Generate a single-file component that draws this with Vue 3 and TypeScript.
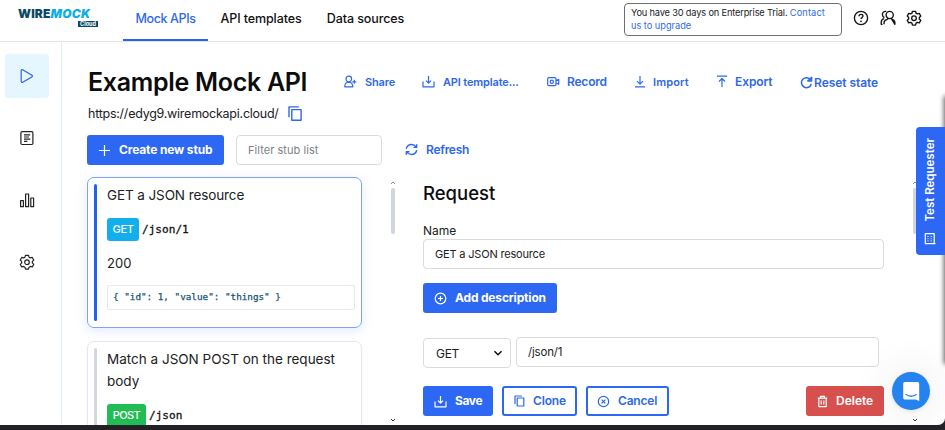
<script setup lang="ts">
import { ref } from 'vue'

interface Action {
  key: string
  label: string
  large?: boolean
}

const tabs = [
  { label: 'Mock APIs', cls: 'tab-mock' },
  { label: 'API templates', cls: 'tab-templates' },
  { label: 'Data sources', cls: 'tab-sources' },
]
const activeTab = ref('Mock APIs')

const actions: Action[] = [
  { key: 'share', label: 'Share' },
  { key: 'template', label: 'API template...' },
  { key: 'record', label: 'Record', large: true },
  { key: 'import', label: 'Import' },
  { key: 'export', label: 'Export', large: true },
  { key: 'reset', label: 'Reset state', large: true },
]

const filter = ref('')
const stubName = ref('GET a JSON resource')
const stubPath = ref('/json/1')
</script>

<template>
  <div class="window">
    <div class="page">
      <header class="header">
        <div class="logo">
          <div class="logo-name"><span class="wire">WIRE</span><span class="mock">MOCK</span></div>
          <span class="logo-cloud">Cloud</span>
        </div>
        <nav class="tabs">
          <a
            v-for="tab in tabs"
            :key="tab.label"
            class="tab"
            :class="[tab.cls, { active: tab.label === activeTab }]"
            @click="activeTab = tab.label"
          >{{ tab.label }}</a>
        </nav>
        <div class="trial">
          You have 30 days on Enterprise Trial. <a class="contact">Contact<br /></a><a class="upgrade">us to upgrade</a>
        </div>
        <div class="header-icons">
          <svg width="16" height="16" viewBox="0 0 16 16">
            <circle cx="8" cy="8" r="6.6" />
            <path d="M6 6.3c0-1.2.9-2 2-2s2 .8 2 1.8c0 1.4-2 1.6-2 3" />
            <circle class="dot" cx="8" cy="11.3" r=".9" />
          </svg>
          <svg width="16" height="16" viewBox="0 0 16 16">
            <circle cx="9.7" cy="5" r="3.6" />
            <path d="M4 14.3v-1.300c0-1.800 1-2.900 2.800-3.400l1.400-1.100M11.200 8.500l1.400 1.100c1.500.5 2.300 1.700 2.300 3.300v1.400zM6.300 1.400C3.600 1 2.400 2.700 2.400 4.600c0 1.600.9 2.600 2 3.100M4.200 8.600C2.200 9.100 1.200 10.600 1.200 12.400v1.900h1.300" />
          </svg>
          <svg width="16" height="16" viewBox="0 0 16 16">
            <path d="M6.5 1.3h3l.55 1.9 1.25.75 1.95-.5 1.5 2.6-1.4 1.4v1.5l1.4 1.4-1.5 2.6-1.95-.5-1.25.75-.55 1.9h-3l-.55-1.9-1.25-.75-1.95.5-1.5-2.6 1.4-1.4v-1.5L1.25 6.05l1.5-2.6 1.95.5 1.25-.75z" />
            <circle cx="8" cy="8.2" r="2.3" />
          </svg>
        </div>
      </header>

      <div class="body">
        <aside class="sidebar">
          <a class="side-item selected">
            <svg width="16" height="16" viewBox="0 0 16 16">
              <path d="M2.200 2.700v10.600c0 .9.8 1.300 1.500.9l9.200-5.300c.7-.4.7-1.300 0-1.700L3.700 1.800c-.7-.4-1.500 0-1.500.9z" />
            </svg>
          </a>
          <a class="side-item">
            <svg width="16" height="16" viewBox="0 0 16 16">
              <rect x="1.9" y="1.7" width="12" height="12.8" rx="1.2" />
              <path d="M5 4.900h6.200M5 7h5M5 9.100h6.200M5 11.300h3.400" />
            </svg>
          </a>
          <a class="side-item">
            <svg width="16" height="16" viewBox="0 0 16 16">
              <rect x="1.6" y="8.7" width="2.8" height="6" />
              <rect x="6.6" y="2" width="3" height="12.7" />
              <rect x="11.800" y="6" width="2.800" height="8.700" />
            </svg>
          </a>
          <a class="side-item">
            <svg width="16" height="16" viewBox="0 0 16 16">
              <path d="M6.5 1.3h3l.55 1.9 1.25.75 1.95-.5 1.5 2.6-1.4 1.4v1.5l1.4 1.4-1.5 2.6-1.95-.5-1.25.75-.55 1.9h-3l-.55-1.9-1.25-.75-1.95.5-1.5-2.6 1.4-1.4v-1.5L1.25 6.05l1.5-2.6 1.95.5 1.25-.75z" />
              <circle cx="8" cy="8.2" r="2.3" />
            </svg>
          </a>
        </aside>

        <main class="main">
          <div class="title-row">
            <h1>Example Mock API</h1>
            <div class="actions">
              <a v-for="a in actions" :key="a.key" class="action" :class="[a.key, { large: a.large }]">
                <svg width="13" height="13" viewBox="0 0 13 13">
                  <template v-if="a.key === 'share'">
                    <circle cx="4.8" cy="4" r="2.8" />
                    <path d="M.8 11.800c0-2.600 1-4.300 3-4.300h2c1.600 0 2.800 1.600 3 4.300zM10.300 4.800v4M8.300 6.800h4" />
                  </template>
                  <path v-else-if="a.key === 'template'" d="M6.500 1v7M4 5.700l2.500 2.500L9 5.700M1 6.600v5.200h11V6.600" />
                  <template v-else-if="a.key === 'record'">
                    <rect x=".7" y="2.7" width="8.300" height="8" rx="1.2" />
                    <circle cx="4.8" cy="6.8" r="1.6" />
                    <path d="M9 5.600l2.700-1.300v5L9 8" />
                  </template>
                  <path v-else-if="a.key === 'import'" d="M6 1v8M3 6.200l3 3 3-3M1 11.800h10.200" />
                  <path v-else-if="a.key === 'export'" d="M6 12V3.500M3 6.500l3-3 3 3M1 1.200h10.200" />
                  <path v-else class="bold" d="M10.600 3.800A5 5 0 1 0 11.300 8M11.600 1.200v3.900H7.800z" />
                </svg>
                <span>{{ a.label }}</span>
              </a>
            </div>
          </div>

          <div class="url-row">
            <span>https://edyg9.wiremockapi.cloud/</span>
            <svg width="14" height="15" viewBox="0 0 14 15">
              <path d="M3.800 3.600h9.300v10.700H3.800zM1 11.300V.9h9.800" />
            </svg>
          </div>

          <div class="stub-tools">
            <button class="btn solid create">
              <svg width="13" height="13" viewBox="0 0 13 13"><path d="M6.500 1v11M1 6.500h11" /></svg>
              <span>Create new stub</span>
            </button>
            <input v-model="filter" class="filter" placeholder="Filter stub list" />
            <a class="refresh">
              <svg width="13" height="13" viewBox="0 0 13 13">
                <path d="M1.200 5.700C2 2.900 4 1.500 6.500 1.500c2 0 3.700 1 4.800 2.600M11.700 1.200v3.200H8.500M11.800 7.300c-.8 2.800-2.800 4.200-5.300 4.200-2 0-3.700-1-4.800-2.600M1.300 11.800V8.600h3.200" />
              </svg>
              <span>Refresh</span>
            </a>
          </div>

          <div class="columns">
            <section class="stubs">
              <article class="card current">
                <div class="bar"></div>
                <div class="card-body">
                  <h3 class="first-title">GET a JSON resource</h3>
                  <div class="route"><span class="badge get">GET</span><code>/json/1</code></div>
                  <div class="status">200</div>
                  <pre class="snippet">{ "id": 1, "value": "things" }</pre>
                </div>
              </article>
              <article class="card">
                <div class="bar"></div>
                <div class="card-body">
                  <h3>Match a JSON POST on the request body</h3>
                  <div class="route"><span class="badge post">POST</span><code>/json</code></div>
                </div>
              </article>
            </section>

            <div class="scrollbar">
              <svg width="6" height="4" viewBox="0 0 6 4"><path d="M1 3l2-2 2 2" /></svg>
              <i class="thumb"></i>
              <svg class="down" width="6" height="4" viewBox="0 0 6 4"><path d="M1 1l2 2 2-2" /></svg>
            </div>

            <section class="editor">
              <h2>Request</h2>
              <label class="name-label" for="stub-name">Name</label>
              <input id="stub-name" v-model="stubName" class="field name" />
              <button class="btn solid add">
                <svg width="13" height="13" viewBox="0 0 13 13"><circle cx="6.5" cy="6.5" r="5.3" /><path d="M6.500 4v5M4 6.500h5" /></svg>
                <span>Add description</span>
              </button>
              <div class="match">
                <div class="method">
                  <span>GET</span>
                  <svg width="10" height="8" viewBox="0 0 10 8"><path d="M1.500 2.200L5 5.700l3.500-3.500" /></svg>
                </div>
                <input v-model="stubPath" class="field path" aria-label="Path" />
              </div>
              <div class="buttons">
                <button class="btn solid save">
                  <svg width="13" height="13" viewBox="0 0 13 13"><path d="M6.500 1v7M4 5.700l2.500 2.500L9 5.700M1 6.600v5.200h11V6.600" /></svg>
                  <span>Save</span>
                </button>
                <button class="btn outline clone">
                  <svg width="11" height="12" viewBox="0 0 11 12"><path d="M3.200 3h6.600v8H3.200zM1 9V1h7" /></svg>
                  <span>Clone</span>
                </button>
                <button class="btn outline cancel">
                  <svg width="13" height="13" viewBox="0 0 13 13"><circle cx="6.5" cy="6.5" r="5.2" /><path d="M4.600 4.600l3.800 3.800M8.400 4.600L4.600 8.400" /></svg>
                  <span>Cancel</span>
                </button>
                <button class="btn danger">
                  <svg width="11" height="13" viewBox="0 0 11 13"><path d="M.8 3.200h9.400M3.500 3V1.300h4V3M1.800 3.400v8.200h7.400V3.400M4.200 5.600v4M6.800 5.600v4" /></svg>
                  <span>Delete</span>
                </button>
              </div>
            </section>

            <div class="scrollbar">
              <svg width="6" height="4" viewBox="0 0 6 4"><path d="M1 3l2-2 2 2" /></svg>
              <i class="thumb"></i>
              <svg class="down" width="6" height="4" viewBox="0 0 6 4"><path d="M1 1l2 2 2-2" /></svg>
            </div>
          </div>
        </main>
      </div>

      <div class="edge-shadow"></div>
      <a class="requester">
        <span>Test Requester</span>
        <svg width="12" height="13" viewBox="0 0 12 13">
          <path d="M1.300 1.600h8.900v10H1.300zM1 11.600h10.500" />
          <path class="dots" d="M4 4v5.500M7.200 4v5.500" />
        </svg>
      </a>
      <a class="chat">
        <svg width="18" height="21" viewBox="0 0 18 21">
          <path class="bubble" d="M3 1h12.500c1 0 1.700.8 1.700 1.800V20l-3.500-1.400H3c-1 0-1.800-.8-1.800-1.800v-14C1.200 1.800 2 1 3 1z" />
          <path class="smile" d="M4 13.600c3 2.200 7.400 2.200 10.300 0" />
        </svg>
      </a>
    </div>
  </div>
</template>

<style>
body {
  margin: 0;
  overflow: hidden;
}
</style>

<style scoped>
* {
  box-sizing: border-box;
}

.window {
  width: 945px;
  height: 430px;
  padding-bottom: 5px;
  background: #222226;
  font-family: Inter, 'Liberation Sans', sans-serif;
  color: #202124;
}

.page {
  position: relative;
  height: 425px;
  overflow: hidden;
  display: flex;
  flex-direction: column;
  background: #fff;
  border-radius: 0 0 7px 0;
}

svg {
  flex: none;
  fill: none;
  stroke: currentColor;
  stroke-width: 1.2;
  stroke-linejoin: round;
}

h1, h2, h3, pre {
  margin: 0;
  font-weight: 400;
}

.header {
  flex: none;
  height: 42px;
  display: flex;
  border-bottom: 1px solid #e3e5e8;
}

.logo {
  width: 123px;
  padding: 8px 0 0 18px;
}

.logo-name {
  width: 80px;
  height: 11px;
  display: flex;
  font-size: 12px;
  line-height: 11px;
  font-weight: 900;
}

.wire {
  color: #0a4a68;
  letter-spacing: 0.15px;
}

.mock {
  color: #10aee8;
  font-style: italic;
  letter-spacing: 0.3px;
}

.logo-cloud {
  display: block;
  width: 20px;
  height: 6px;
  margin: 2px 0 0 60px;
  background: #0a4a68;
  color: #fff;
  font-size: 5.5px;
  line-height: 6px;
  font-weight: 700;
  text-align: center;
}

.tabs {
  display: flex;
  height: 42px;
}

.tab {
  width: 85px;
  height: 41px;
  font-size: 12.5px;
  font-weight: 500;
  line-height: 37px;
  text-align: center;
  white-space: nowrap;
  letter-spacing: -0.1px;
  color: #111;
  cursor: pointer;
}

.tab-mock {
  letter-spacing: -0.39px;
}

.tab-templates {
  width: 106px;
}

.tab-sources {
  width: 103px;
}

.tab.active {
  border-bottom: 2px solid #2563f5;
  color: #2c67ee;
}

.trial {
  width: 218px;
  height: 33px;
  margin: 3px 0 0 207px;
  padding: 3px 6px 0;
  border: 1px solid #6f6f73;
  border-radius: 4px;
  font-size: 9.25px;
  line-height: 12.5px;
  letter-spacing: -0.17px;
  white-space: nowrap;
}

.trial a {
  color: #2f6bea;
}

.trial .contact {
  letter-spacing: 0.1px;
}

.trial .upgrade {
  letter-spacing: -0.03px;
}

.header-icons {
  display: flex;
  gap: 10.5px;
  padding: 10px 0 0 11px;
  color: #151515;
}

.header-icons svg {
  stroke-width: 1.35;
}

.dot {
  fill: currentColor;
  stroke: none;
}

.body {
  flex: 1;
  min-height: 0;
  display: flex;
}

.sidebar {
  flex: none;
  width: 62px;
  padding: 12px 0 0 5px;
  border-right: 1px solid #e2effa;
  display: flex;
  flex-direction: column;
  gap: 18px;
}

.side-item {
  width: 44px;
  height: 44px;
  display: grid;
  place-items: center;
  border-radius: 3px;
  color: #222;
}

.side-item.selected {
  background: #e6f6fe;
  color: #2b64ef;
}

.main {
  flex: 1;
  min-width: 0;
  padding-left: 25px;
  display: flex;
  flex-direction: column;
}

.title-row {
  flex: none;
  height: 60px;
  padding-top: 20px;
  display: flex;
}

h1 {
  width: 257px;
  padding-left: 1px;
  font-size: 25px;
  line-height: 40px;
  font-weight: 600;
  letter-spacing: -0.3px;
  white-space: nowrap;
  color: #0c0c0d;
}

.actions {
  display: grid;
  grid-template-columns: 78px 125px 87px 82px 84px 90px;
  height: 39px;
}

.action {
  display: flex;
  align-items: center;
  gap: 8px;
  color: #2d68ec;
  font-size: 11px;
  font-weight: 600;
  letter-spacing: -0.15px;
  white-space: nowrap;
}

.action.large {
  font-size: 12px;
}

.action.import {
  gap: 6px;
  letter-spacing: 0.15px;
}

.action.export {
  gap: 6px;
  letter-spacing: -0.1px;
}

.action.reset {
  gap: 1px;
  letter-spacing: -0.05px;
  padding-top: 2px;
}

.action.record {
  gap: 7px;
  letter-spacing: -0.2px;
}

.action.record,
.action.export {
  padding-bottom: 1px;
}

.bold {
  stroke-width: 1.5;
}

.url-row {
  flex: none;
  height: 23px;
  padding-left: 1px;
  display: flex;
  align-items: center;
  gap: 9px;
  font-size: 12.5px;
  letter-spacing: -0.25px;
}

.url-row svg {
  color: #2c67ee;
  stroke-width: 1.4;
}

.stub-tools {
  flex: none;
  height: 30px;
  margin-top: 10px;
  display: flex;
}

.btn {
  height: 30px;
  padding: 0;
  border: 0;
  border-radius: 3px;
  display: flex;
  align-items: center;
  font-family: inherit;
  font-size: 12px;
  font-weight: 600;
  line-height: 18px;
  white-space: nowrap;
}

.btn.solid {
  background: #2d68f5;
  color: #fff;
}

.btn.outline {
  border: 2px solid #2d68f5;
  background: #fff;
  color: #2d68ec;
}

.create {
  width: 137px;
  padding-left: 11px;
  gap: 8px;
  font-weight: 700;
  letter-spacing: -0.15px;
}

.filter {
  width: 146px;
  height: 30px;
  margin-left: 12px;
  padding: 0 11px;
  border: 1px solid #d9dbde;
  border-radius: 4px;
  outline: none;
  font: 11px Inter, sans-serif;
  letter-spacing: 0.05px;
}

.filter::placeholder {
  color: #7c7f85;
}

.refresh {
  height: 29px;
  margin-left: 23px;
  display: flex;
  align-items: center;
  gap: 8px;
  color: #2d68ec;
  font-size: 12px;
  font-weight: 600;
  letter-spacing: -0.27px;
}

.refresh svg {
  stroke-width: 1.4;
}

.columns {
  flex: 1;
  min-height: 0;
  margin-top: 12px;
  display: flex;
}

.stubs {
  width: 275px;
  display: flex;
  flex-direction: column;
  gap: 13px;
}

.card {
  flex: none;
  height: 151px;
  padding: 6px 6px;
  border: 1px solid #e6e7ea;
  border-radius: 7px;
  display: flex;
  gap: 10px;
  box-shadow: 0 1px 3px rgba(30, 40, 60, 0.04);
}

.card.current {
  border-color: #7da2f8;
  box-shadow: 0 3px 12px rgba(45, 104, 245, 0.14);
}

.bar {
  flex: none;
  width: 3px;
  border-radius: 2px;
  background: #d6d7de;
}

.current .bar {
  background: #2261f5;
}

.card-body {
  flex: 1;
  min-width: 0;
}

h3 {
  font-size: 13.5px;
  line-height: 22px;
}

.first-title {
  letter-spacing: -0.1px;
}

.route {
  height: 23px;
  margin-top: 12px;
  display: flex;
  align-items: center;
  gap: 3px;
}

.badge {
  height: 23px;
  border-radius: 3px;
  color: #fff;
  font-size: 11px;
  font-weight: 500;
  line-height: 23px;
  text-align: center;
}

.badge.get {
  width: 32px;
  background: #12aeee;
  letter-spacing: -0.4px;
}

.badge.post {
  width: 39px;
  background: #20bd55;
  letter-spacing: -0.6px;
}

code, .snippet {
  font-family: 'DejaVu Sans Mono', 'Liberation Mono', monospace;
}

code {
  font-size: 11.1px;
  color: #111;
  -webkit-text-stroke: 0.3px currentColor;
}

.status {
  margin-top: 12px;
  font-size: 13px;
  line-height: 20px;
}

.snippet {
  height: 25px;
  margin-top: 12px;
  padding-left: 5px;
  border: 1px solid #e7e8ea;
  border-radius: 2px;
  font-size: 9.3px;
  line-height: 22px;
  color: #17536f;
  -webkit-text-stroke: 0.25px currentColor;
}

.scrollbar {
  flex: none;
  width: 6px;
  margin-left: 27.5px;
  padding: 4px 0 3px;
  display: flex;
  flex-direction: column;
  align-items: center;
  color: #8b8e92;
}

.scrollbar svg {
  stroke-width: 1;
}

.thumb {
  width: 4px;
  height: 46px;
  margin-top: 3px;
  border-radius: 2px;
  background: #cfd6dd;
}

.down {
  margin-top: auto;
  color: #333;
}

.editor {
  width: 461px;
  margin-left: 27.5px;
}

h2 {
  padding-top: 4px;
  font-size: 18.5px;
  line-height: 24px;
  font-weight: 500;
  color: #0c0c0d;
}

.name-label {
  display: block;
  margin-top: 18px;
  font-size: 12px;
  line-height: 16px;
}

.field {
  height: 30px;
  padding: 0 11px;
  border: 1px solid #d9dbde;
  border-radius: 4px;
  outline: none;
  color: #202124;
  font: 11px Inter, sans-serif;
  letter-spacing: -0.18px;
}

.field.name {
  display: block;
  width: 461px;
  padding-bottom: 1px;
}

.add {
  width: 134px;
  margin-top: 14px;
  padding-left: 11px;
  gap: 8px;
}

.btn.add {
  font-weight: 700;
  letter-spacing: -0.17px;
}

.match {
  margin-top: 24px;
  display: flex;
  gap: 5px;
}

.method {
  width: 88px;
  height: 30px;
  margin-top: 1px;
  padding: 0 7px 0 12px;
  border: 1px solid #d9dbde;
  border-radius: 4px;
  display: flex;
  align-items: center;
  justify-content: space-between;
  font-size: 12px;
  letter-spacing: -0.3px;
}

.method svg {
  stroke-width: 1.5;
  color: #111;
}

.field.path {
  width: 363px;
  padding: 0 11px 1px;
  font-size: 11.5px;
}

.buttons {
  margin-top: 18px;
  display: flex;
}

.save {
  width: 70px;
  padding-left: 11px;
  gap: 8px;
  letter-spacing: -0.4px;
}

.btn.save {
  font-weight: 700;
}

.clone {
  width: 75px;
  margin-left: 9px;
  padding-left: 10px;
  gap: 8px;
  letter-spacing: -0.15px;
}

.cancel {
  width: 83px;
  margin-left: 9px;
  padding-left: 9px;
  gap: 8px;
  letter-spacing: -0.2px;
}

.danger {
  width: 78px;
  margin-left: auto;
  padding-left: 11px;
  gap: 8px;
  background: #d8504e;
  color: #fff;
}

.edge-shadow {
  position: absolute;
  top: 97px;
  right: -6px;
  width: 6px;
  height: 266px;
  box-shadow: 0 0 5px 1px rgba(0, 0, 0, 0.65);
}

.requester {
  position: absolute;
  top: 127px;
  right: 0;
  width: 29.5px;
  height: 127.5px;
  padding: 11px 0 10px;
  border-radius: 4px 0 0 4px;
  background: #2d68f5;
  color: #fff;
  display: flex;
  flex-direction: column;
  align-items: center;
  justify-content: space-between;
}

.requester span {
  writing-mode: vertical-rl;
  transform: rotate(180deg);
  font-size: 11.5px;
  line-height: 16px;
  font-weight: 600;
}

.dots {
  stroke-width: 1;
  stroke-dasharray: 1 1.2;
}

.chat {
  position: absolute;
  top: 372px;
  right: 15.5px;
  width: 38px;
  height: 38px;
  border-radius: 50%;
  display: grid;
  place-items: center;
  background: #2483ee;
  box-shadow: 0 1px 32px 16px rgba(0, 0, 0, 0.035), 0 1px 4px rgba(0, 0, 0, 0.1);
}

.bubble {
  fill: #fff;
  stroke: none;
}

.smile {
  stroke: #2483ee;
  stroke-width: 1.3;
  stroke-linecap: round;
}

.editor + .scrollbar {
  margin-left: 28px;
}
</style>
